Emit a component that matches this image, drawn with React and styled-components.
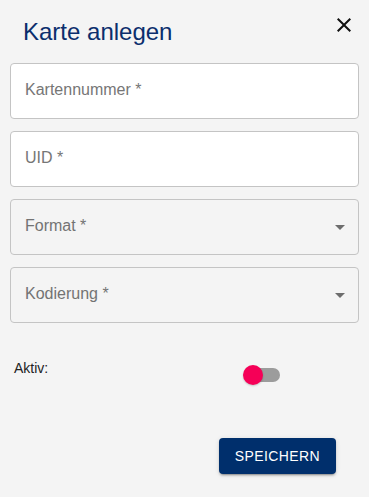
import React from "react";
import styled, { createGlobalStyle } from "styled-components";

const GlobalStyle = createGlobalStyle`
  html, body {
    margin: 0;
    padding: 0;
    background: #f4f4f4;
    font-family: "Liberation Sans", Arial, sans-serif;
  }
`;

const App = () => {
  return (
    <>
      <GlobalStyle />
      <Dialog>
        <Header>
          <Title>Karte anlegen</Title>
          <CloseButton aria-label="Schließen">
            <svg width="24" height="24" viewBox="0 0 24 24">
              <path
                fill="currentColor"
                d="M19 6.41 17.59 5 12 10.59 6.41 5 5 6.41 10.59 12 5 17.59 6.41 19 12 13.41 17.59 19 19 17.59 13.41 12z"
              />
            </svg>
          </CloseButton>
        </Header>

        <Fields>
          <TextInput type="text" placeholder="Kartennummer *" />
          <TextInput type="text" placeholder="UID *" />
          <Select>
            <span>Format *</span>
            <ArrowIcon />
          </Select>
          <Select>
            <span>Kodierung *</span>
            <ArrowIcon />
          </Select>
        </Fields>

        <SwitchRow>
          <SwitchLabel>Aktiv:</SwitchLabel>
          <Switch>
            <Track />
            <Thumb />
          </Switch>
        </SwitchRow>

        <Actions>
          <SaveButton>Speichern</SaveButton>
        </Actions>
      </Dialog>
    </>
  );
};

export default App;

const ArrowIcon = () => (
  <ArrowSvg viewBox="0 0 24 24">
    <path fill="currentColor" d="M7 10l5 5 5-5z" />
  </ArrowSvg>
);

const Dialog = styled.div`
  width: 369px;
  min-height: 497px;
  background: #f4f4f4;
  box-sizing: border-box;
`;

const Header = styled.div`
  display: flex;
  justify-content: space-between;
  align-items: flex-start;
  padding: 16px 13px 15px 23px;
`;

const Title = styled.h2`
  margin: 0;
  font-size: 24px;
  font-weight: 400;
  line-height: 32px;
  color: #0b2e6d;
`;

const CloseButton = styled.button`
  display: flex;
  padding: 0;
  margin-top: -3px;
  border: none;
  background: transparent;
  color: #111;
  cursor: pointer;
`;

const Fields = styled.div`
  display: flex;
  flex-direction: column;
  gap: 12px;
  padding: 0 10px;
`;

const TextInput = styled.input`
  height: 56px;
  box-sizing: border-box;
  width: 100%;
  padding: 0 14px 2px;
  border: 1px solid #c4c4c4;
  border-radius: 4px;
  background: #fff;
  font-family: inherit;
  font-size: 16px;
  color: #222;
  outline: none;
  &::placeholder {
    color: #767676;
  }
`;

const Select = styled.div`
  position: relative;
  height: 56px;
  box-sizing: border-box;
  display: flex;
  align-items: center;
  padding: 0 14px 2px;
  border: 1px solid #c4c4c4;
  border-radius: 4px;
  background: #f4f4f4;
  font-size: 16px;
  color: #737373;
`;

const ArrowSvg = styled.svg`
  position: absolute;
  right: 6px;
  top: 15px;
  width: 24px;
  height: 24px;
  color: #6d6d6d;
`;

const SwitchRow = styled.div`
  display: flex;
  align-items: flex-start;
  padding: 33px 4px 0 14px;
`;

const SwitchLabel = styled.span`
  flex: 0 0 220px;
  margin-top: 2px;
  font-size: 14px;
  line-height: 20px;
  color: #222;
`;

const Switch = styled.span`
  position: relative;
  display: inline-flex;
  width: 58px;
  height: 38px;
  padding: 12px;
  box-sizing: border-box;
`;

const Track = styled.span`
  width: 100%;
  height: 100%;
  border-radius: 7px;
  background: #9c9c9c;
`;

const Thumb = styled.span`
  position: absolute;
  left: 9px;
  top: 9px;
  width: 20px;
  height: 20px;
  border-radius: 50%;
  background: #f50057;
  box-shadow: 0 1px 2px rgba(0, 0, 0, 0.2);
`;

const Actions = styled.div`
  display: flex;
  justify-content: flex-end;
  padding: 44px 33px 0 0;
`;

const SaveButton = styled.button`
  height: 36px;
  padding: 0 16px;
  border: none;
  border-radius: 4px;
  background: #002f6c;
  color: #fff;
  font-family: inherit;
  font-size: 14px;
  font-weight: 500;
  letter-spacing: 0.4px;
  text-transform: uppercase;
  cursor: pointer;
  box-shadow: 0 3px 1px -2px rgba(0, 0, 0, 0.2), 0 2px 2px 0 rgba(0, 0, 0, 0.14),
    0 1px 5px 0 rgba(0, 0, 0, 0.12);
`;
